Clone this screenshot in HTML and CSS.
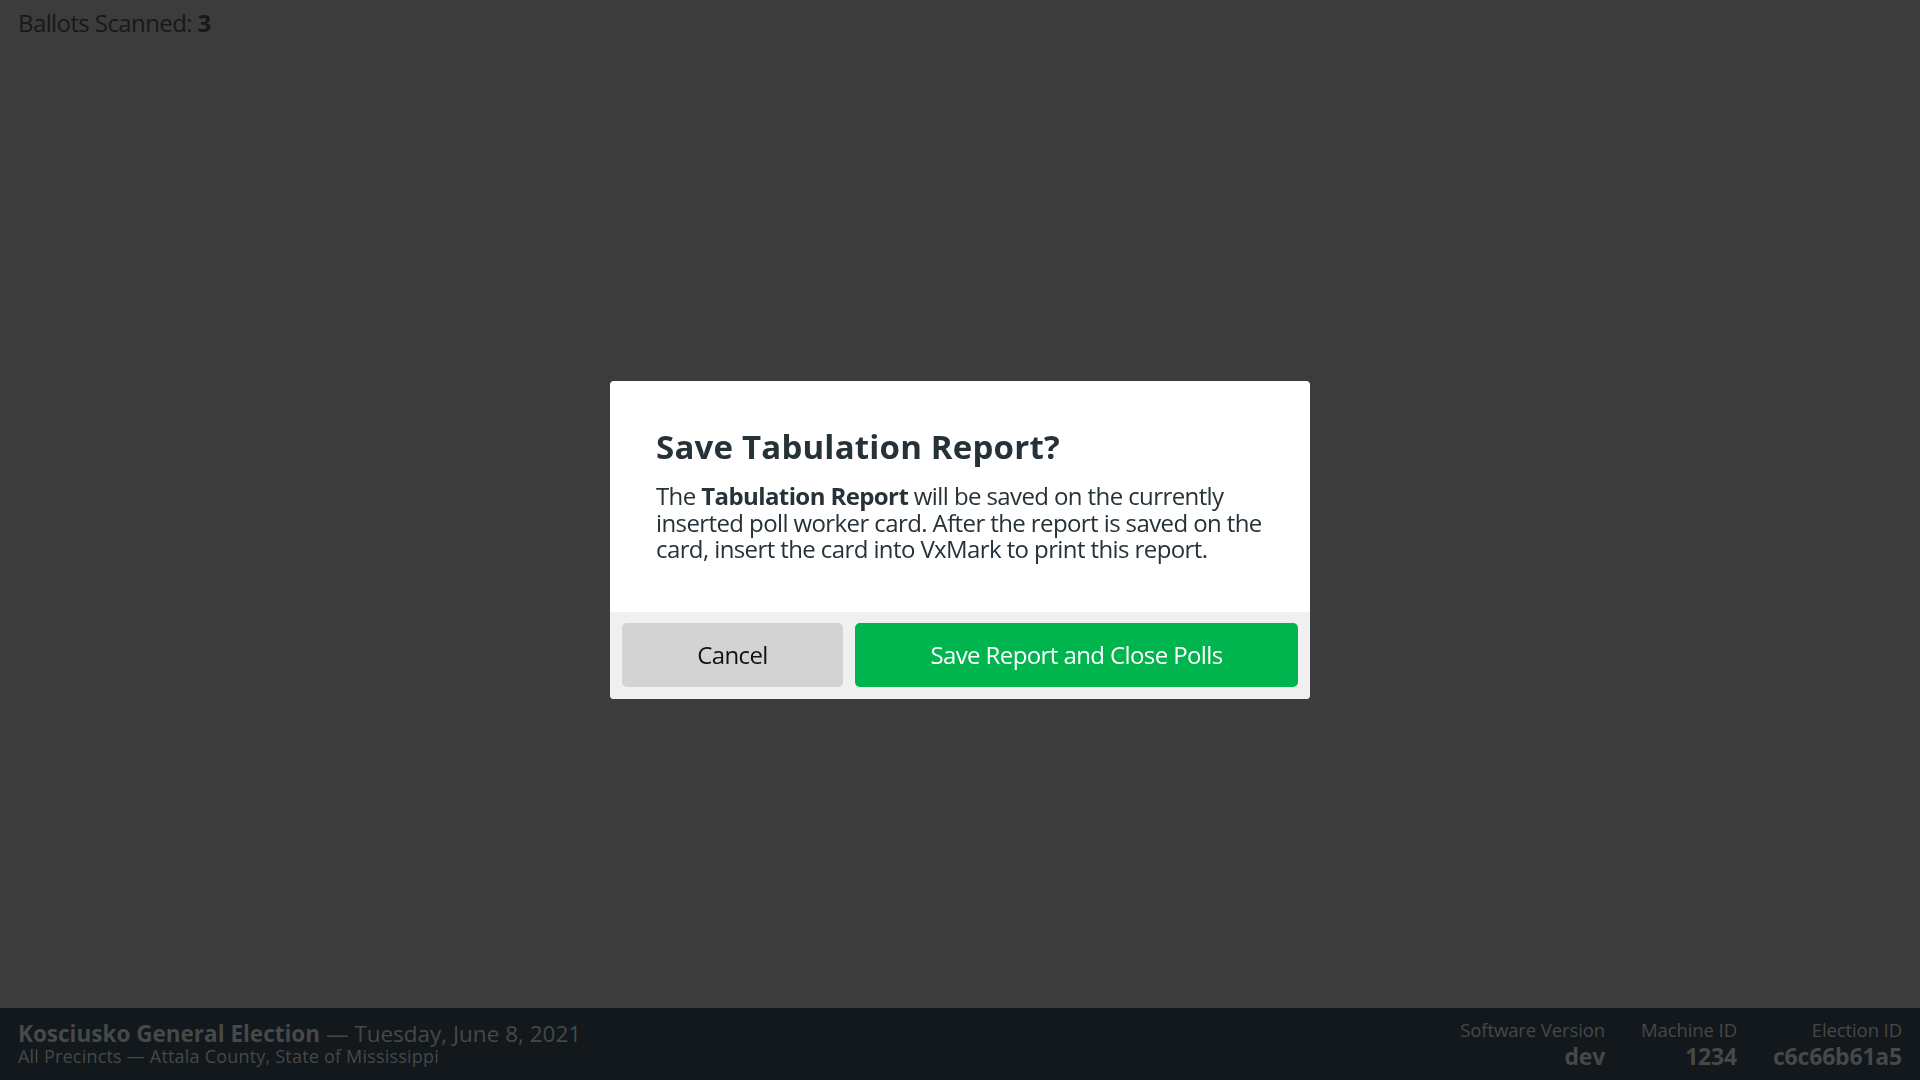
FILE: index.html
```html
<!DOCTYPE html>
<html lang="en">
<head>
<meta charset="utf-8">
<title>VxScan</title>
<link rel="stylesheet" href="styles.css">
</head>
<body>
<div class="screen">
  <main class="main">
    <div class="status">Ballots Scanned: <strong>3</strong></div>
  </main>
  <footer class="footer">
    <div class="election">
      <div class="election-title"><strong>Kosciusko General Election</strong> — Tuesday, June 8, 2021</div>
      <div class="election-sub">All Precincts — Attala County, State of Mississippi</div>
    </div>
    <div class="meta">
      <div class="meta-item"><div class="meta-label">Software Version</div><div class="meta-value">dev</div></div>
      <div class="meta-item"><div class="meta-label">Machine ID</div><div class="meta-value">1234</div></div>
      <div class="meta-item"><div class="meta-label">Election ID</div><div class="meta-value">c6c66b61a5</div></div>
    </div>
  </footer>
</div>
<div class="overlay">
  <div class="modal" role="dialog">
    <div class="modal-content">
      <h1 class="modal-title">Save Tabulation Report?</h1>
      <p class="modal-text">The <strong>Tabulation Report</strong> will be saved on the currently inserted poll worker card. After the report is saved on the card, insert the card into VxMark to print this report.</p>
    </div>
    <div class="modal-actions">
      <button class="btn btn-cancel">Cancel</button>
      <button class="btn btn-primary">Save Report and Close Polls</button>
    </div>
  </div>
</div>
</body>
</html>
```
FILE: styles.css
```css
* { box-sizing: border-box; }
html, body { margin: 0; padding: 0; height: 100%; }
body {
  font-family: "Open Sans", "Noto Sans", sans-serif;
  background: #3c3c3c;
  color: #1a1c1e;
  overflow: hidden;
}
.screen { display: flex; flex-direction: column; height: 100vh; }
.main { flex: 1; padding: 8px 18px; }
.status { font-size: 24px; line-height: 30px; color: #16191b; letter-spacing: -0.6px; }
.status strong { font-weight: 700; }
.footer {
  height: 72px;
  background: #12181b;
  display: flex;
  justify-content: space-between;
  align-items: center;
  padding: 0 18px;
  color: #464849;
}
.election-title { font-size: 22.5px; line-height: 24px; letter-spacing: 0; }
.election-title strong { font-weight: 700; }
.election-sub { font-size: 18px; line-height: 21px; letter-spacing: 0.2px; }
.meta { display: flex; gap: 36px; }
.meta-item { text-align: right; }
.meta-label { font-size: 18.5px; line-height: 24px; letter-spacing: -0.1px; }
.meta-value { font-size: 23px; line-height: 28px; font-weight: 700; letter-spacing: -0.2px; }
.overlay {
  position: fixed;
  inset: 0;
  display: flex;
  align-items: center;
  justify-content: center;
}
.modal {
  width: 700px;
  background: #ffffff;
  border-radius: 4px;
  overflow: hidden;
}
.modal-content { padding: 46px 46px 49px; }
.modal-title {
  margin: 0 0 16px;
  font-size: 33px;
  line-height: 40px;
  font-weight: 700;
  color: #263238;
  letter-spacing: 0.2px;
}
.modal-text {
  margin: 0;
  font-size: 24px;
  line-height: 26.5px;
  color: #263238;
  letter-spacing: -0.6px;
}
.modal-text strong { font-weight: 700; }
.modal-actions {
  background: #f0f0f0;
  padding: 11px 12px 12px;
  display: flex;
  gap: 12px;
}
.btn {
  height: 64px;
  border: none;
  border-radius: 5px;
  font-family: inherit;
  font-size: 24px;
  letter-spacing: -0.6px;
  cursor: pointer;
}
.btn-cancel { width: 221px; background: #d3d3d3; color: #111; }
.btn-primary { flex: 1; background: #00b54e; color: #ffffff; }
```
